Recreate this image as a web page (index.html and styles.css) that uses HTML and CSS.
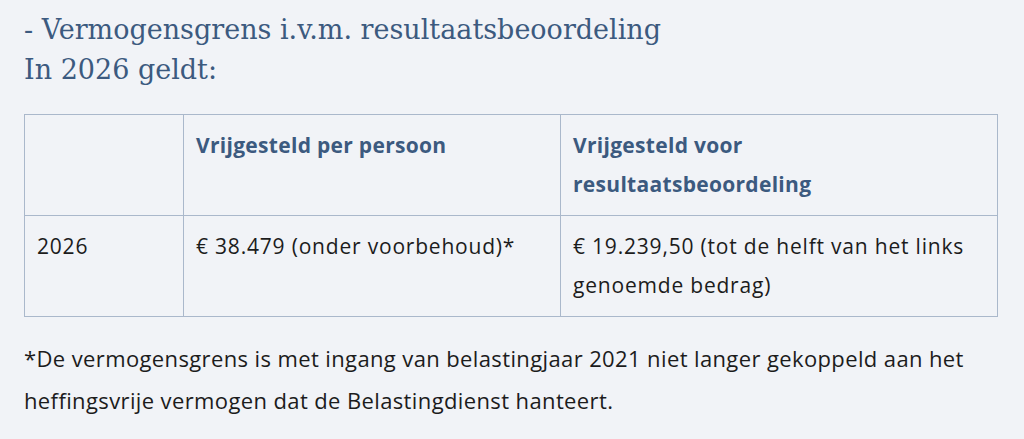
FILE: index.html
```html
<!DOCTYPE html>
<html lang="nl">
<head>
<meta charset="utf-8">
<link rel="stylesheet" href="styles.css">
</head>
<body>
<main class="content">
  <h2 class="title">- Vermogensgrens i.v.m. resultaatsbeoordeling<br>In 2026 geldt:</h2>
  <table class="grid">
    <colgroup>
      <col class="c1"><col class="c2"><col class="c3">
    </colgroup>
    <thead>
      <tr><th></th><th>Vrijgesteld per persoon</th><th>Vrijgesteld voor resultaatsbeoordeling</th></tr>
    </thead>
    <tbody>
      <tr><td>2026</td><td>€ 38.479 (onder voorbehoud)*</td><td>€ 19.239,50 (tot de helft van het links genoemde bedrag)</td></tr>
    </tbody>
  </table>
  <p class="note">*De vermogensgrens is met ingang van belastingjaar 2021 niet langer gekoppeld aan het heffingsvrije vermogen dat de Belastingdienst hanteert.</p>
</main>
</body>
</html>
```
FILE: styles.css
```css
html, body {
  margin: 0;
  padding: 0;
  background: #f1f3f7;
}
.content {
  padding: 10px 24px 0 24px;
  font-family: "Open Sans", "Noto Sans", sans-serif;
  color: #1c1c1c;
}
.title {
  margin: 0 0 24px 0;
  font-family: "DejaVu Serif", serif;
  font-weight: 400;
  font-size: 27px;
  line-height: 40px;
  color: #3c5a7f;
}
.grid {
  width: 973px;
  table-layout: fixed;
  border-collapse: collapse;
  font-size: 21px;
  line-height: 39px;
  letter-spacing: 0.8px;
}
.c1 { width: 159px; }
.c2 { width: 377px; }
.c3 { width: 437px; }
.grid th, .grid td {
  border: 1px solid #aab8cb;
  padding: 11px 12px;
  text-align: left;
  vertical-align: top;
}
.grid th {
  font-weight: 700;
  letter-spacing: 0.3px;
  color: #3c5a7f;
}
.note {
  margin: 20px 0 0 0;
  font-size: 22px;
  line-height: 42px;
  letter-spacing: 0.38px;
}
```
